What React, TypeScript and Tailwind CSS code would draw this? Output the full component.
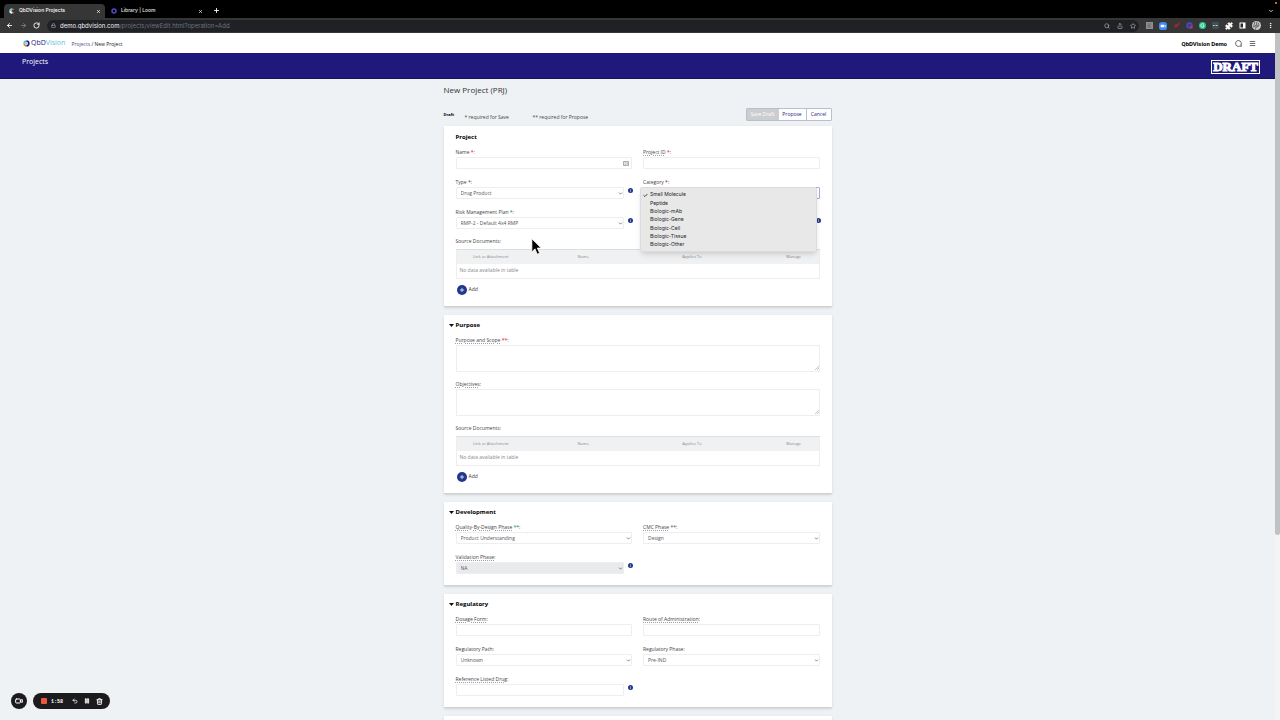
import { useState } from 'react';
import type { ReactNode } from 'react';
import {
  ArrowLeft,
  ArrowRight,
  Check,
  ChevronDown,
  EllipsisVertical,
  Lock,
  Menu,
  MessageCircle,
  Pause,
  Plus,
  Puzzle,
  RotateCw,
  Search,
  Share,
  Star,
  Trash2,
  Undo2,
  Video,
  X,
} from 'lucide-react';

const CATEGORIES = [
  'Small Molecule',
  'Peptide',
  'Biologic-mAb',
  'Biologic-Gene',
  'Biologic-Cell',
  'Biologic-Tissue',
  'Biologic-Other',
];

function LogoMark({ className }: { className?: string }) {
  return (
    <svg viewBox="0 0 20 20" className={className} aria-hidden="true">
      <path d="M10 1 A9 9 0 0 0 1 10 L6 10 A4 4 0 0 1 10 6 Z" fill="#4fc3d9" />
      <path d="M1 10 A9 9 0 0 0 10 19 L10 14 A4 4 0 0 1 6 10 Z" fill="#e9853a" />
      <path d="M10 1 A9 9 0 0 1 10 19 L10 14 A4 4 0 0 0 10 6 Z" fill="#29227f" />
      <circle cx="10" cy="10" r="4" fill="#9fdbe6" />
    </svg>
  );
}

// same mark in the lighter colours used on dark tab strips
function TabMark() {
  return (
    <svg viewBox="0 0 20 20" className="h-[6px] w-[6px]" aria-hidden="true">
      <path d="M10 1 A9 9 0 0 0 1 10 L10 10 Z" fill="#6ad4e8" />
      <path d="M1 10 A9 9 0 0 0 10 19 L13 14 L6 10 Z" fill="#f2f2f2" />
      <path d="M10 1 L17 4 L12 8 Z" fill="#e9853a" />
      <path d="M12 16 L18 14 L14 19 Z" fill="#e9853a" />
    </svg>
  );
}

function BrowserTabs() {
  return (
    <div className="relative flex h-[18px] items-end bg-black px-1 text-white">
      <span className="absolute right-[3px] top-[2px] h-[2px] w-[2px] rounded-full bg-amber-500" />
      <div className="flex h-[14px] w-[101px] items-center rounded-t bg-[#363636] pl-[5px] pr-1">
        <TabMark />
        <span className="ml-1 flex-1 text-[5px] font-medium">QbDVision Projects</span>
        <button aria-label="Close QbDVision Projects"><X size={5} strokeWidth={3} /></button>
      </div>
      <div className="flex h-[14px] w-[98px] items-center pl-[6px]">
        <svg viewBox="0 0 12 12" className="h-[6px] w-[6px]" aria-hidden="true">
          <circle cx="6" cy="6" r="4" fill="none" stroke="#5145c9" strokeWidth="3" />
        </svg>
        <span className="ml-1 flex-1 text-[5px] font-medium text-gray-200">Library | Loom</span>
        <button aria-label="Close Library"><X size={5} strokeWidth={3} /></button>
      </div>
      <button aria-label="New tab" className="mb-[4px] ml-[10px]"><Plus size={7} strokeWidth={3} /></button>
      <button aria-label="Tab list" className="mb-[4px] ml-auto mr-[2px]"><ChevronDown size={6} strokeWidth={3} /></button>
    </div>
  );
}

function BrowserToolbar() {
  return (
    <div className="flex h-[15px] items-center bg-[#363636] px-[6px] text-white">
      <button aria-label="Back"><ArrowLeft size={7} strokeWidth={3} /></button>
      <button aria-label="Forward" className="ml-[7px] text-gray-400"><ArrowRight size={7} /></button>
      <button aria-label="Reload" className="ml-[6px]"><RotateCw size={7} strokeWidth={3} /></button>
      <div className="ml-[7px] flex h-[12px] flex-1 items-center rounded-full bg-[#202124] pl-[4px] pr-[3px]">
        <Lock size={5} className="text-gray-400" strokeWidth={3} />
        <span className="ml-[4px] flex-1 text-[6px] text-gray-100">
          demo.qbdvision.com<span className="text-gray-500">/projects/viewEdit.html?operation=Add</span>
        </span>
        <div className="flex items-center gap-[7px] text-gray-300">
          <Search size={6} />
          <Share size={6} />
          <Star size={6} />
        </div>
      </div>
      <div className="ml-[7px] flex items-center gap-[6px]">
        <svg viewBox="0 0 14 14" className="h-[7px] w-[7px]" aria-hidden="true">
          <rect width="14" height="14" fill="#8b8f92" />
          <path d="M3 4h8M3 7h5M3 10h8" stroke="#5b5f62" strokeWidth="1.5" />
        </svg>
        <svg viewBox="0 0 14 14" className="h-[8px] w-[8px]" aria-hidden="true">
          <rect width="14" height="14" rx="5" fill="#3f8cf0" />
          <path d="M3 5h6v4H3zM9.5 6.5l2-1.5v4l-2-1.5z" fill="#fff" />
        </svg>
        <svg viewBox="0 0 14 14" className="h-[7px] w-[7px]" aria-hidden="true">
          <path d="M1 13L5 4l3 1 4-5 1 3-5 8-2-2z" fill="#b3202c" />
        </svg>
        <svg viewBox="0 0 14 14" className="h-[7px] w-[7px]" aria-hidden="true">
          <circle cx="7" cy="7" r="6.500" fill="#4d49b8" />
          <circle cx="7" cy="7" r="2.500" fill="none" stroke="#2b2780" strokeWidth="1.500" />
          <rect x="8" y="8" width="5" height="5" fill="#b53a63" />
        </svg>
        <svg viewBox="0 0 14 14" className="h-[7px] w-[7px]" aria-hidden="true">
          <circle cx="7" cy="7" r="7" fill="#22c98d" />
          <path d="M10 5a3.500 3.500 0 1 0 0 4V7.500H7.500" fill="none" stroke="#fff" strokeWidth="1.500" />
        </svg>
        <svg viewBox="0 0 14 14" className="h-[7px] w-[7px]" aria-hidden="true">
          <rect width="14" height="14" rx="2" fill="#3f4e57" />
          <path d="M2 7h10" stroke="#c5d0d6" strokeWidth="2" strokeDasharray="2 1" />
        </svg>
        <Puzzle size={8} fill="currentColor" />
        <svg viewBox="0 0 14 14" className="h-[7px] w-[7px]" aria-hidden="true">
          <rect x="1" y="1" width="12" height="12" fill="#fff" />
          <rect x="3" y="3" width="5" height="8" fill="#2b2b2b" />
        </svg>
        <svg viewBox="0 0 18 18" className="h-[9px] w-[9px]" aria-hidden="true">
          <circle cx="9" cy="9" r="9" fill="#c9c9c9" />
          <path d="M6 2l-3 9M10 1L7 17M13 4l-2 8M3 12l5-3M9 13l6-5" stroke="#444" strokeWidth="1.500" />
        </svg>
        <button aria-label="Browser menu"><EllipsisVertical size={7} strokeWidth={3} /></button>
      </div>
    </div>
  );
}

function SiteHeader() {
  return (
    <>
      <header className="flex h-[20px] items-center bg-white pl-[23px] pr-[19px]">
        <a href="#home" className="flex items-center text-[7px] leading-[10px] text-[#29227f]">
          <LogoMark className="mr-px h-[7px] w-[7px]" />
          QbD<span className="text-[#5cc3dc]">Vision</span>
        </a>
        <nav className="ml-[6px] pt-px text-[5px] leading-[10px] text-gray-900">
          <a href="#projects" className="text-[#4a4690]">Projects</a> / New Project
        </nav>
        <span className="ml-auto font-[Roboto] text-[6px] font-bold text-black">QbDVision Demo</span>
        <button aria-label="Messages" className="ml-[8px]"><MessageCircle size={7} className="-scale-x-100" /></button>
        <button aria-label="Menu" className="ml-[7px]"><Menu size={7} /></button>
      </header>
      <div className="flex h-[26px] items-start justify-between border-b border-[#17125c] bg-[#20197c] pl-[22px] pr-[15px] text-white">
        <h2 className="pt-[4px] text-[7px] leading-[10px]">Projects</h2>
        <div className="mt-[7px] border border-white px-px font-['Liberation_Serif',serif] text-[13px] font-bold leading-[12px] [-webkit-text-stroke:1px_white]">
          DRAFT
        </div>
      </div>
    </>
  );
}

function InfoButton({ name }: { name: string }) {
  return (
    <button type="button" aria-label={`About ${name}`} className="-mr-px mt-px h-[5px] w-[5px] shrink-0">
      <svg viewBox="0 0 10 10" className="h-[5px] w-[5px]">
        <circle cx="5" cy="5" r="5" fill="#20388c" />
        <path d="M5 4.500v3M5 2.200v1.200" stroke="#fff" strokeWidth="1.200" />
      </svg>
    </button>
  );
}

type FieldProps = {
  id: string;
  label: string;
  mark?: string;
  markClass?: string;
  hint?: boolean;
  info?: boolean;
  children: ReactNode;
};

function Field({ id, label, mark, markClass = 'text-gray-700', hint, info, children }: FieldProps) {
  return (
    <div>
      <label htmlFor={id} className="block text-[5px] leading-[10px] text-[#444]">
        <span className={hint ? 'underline decoration-gray-400 decoration-dotted decoration-1 underline-offset-1' : ''}>{label}</span>
        {mark && <span className={markClass}> {mark}</span>}:
      </label>
      <div className="flex gap-[4px]">
        <div className="relative min-w-0 flex-1">{children}</div>
        {info && <InfoButton name={label} />}
      </div>
    </div>
  );
}

const inputClass = 'block h-[12px] w-full rounded-[1px] border border-[#eeeeee] bg-white px-[4px] text-[5px] text-[#555] outline-none';

function Select({ id, value, disabled }: { id: string; value: string; disabled?: boolean }) {
  return (
    <>
      <select
        id={id}
        defaultValue={value}
        disabled={disabled}
        className="block h-[12px] w-full appearance-none rounded-[1px] border border-[#eeeeee] bg-white px-[4px] pt-px text-[5px] text-[#555] opacity-100 outline-none disabled:bg-[#e9eaec]"
      >
        <option>{value}</option>
      </select>
      <ChevronDown size={5} className="pointer-events-none absolute right-[1px] top-[4px] text-gray-700" strokeWidth={3} />
    </>
  );
}

function TextArea({ id }: { id: string }) {
  return (
    <>
      <textarea id={id} className="block h-[27px] w-full resize-none border border-[#eeeeee] text-[5px] outline-none" />
      <svg viewBox="0 0 8 8" className="absolute bottom-[2px] right-[1px] h-[4px] w-[4px]" aria-hidden="true">
        <path d="M0 8L8 0M4 8l4-4" stroke="#888" strokeWidth="1" />
      </svg>
    </>
  );
}

function CategoryMenu() {
  const [selected, setSelected] = useState('Small Molecule');

  return (
    <>
      <button
        id="category"
        type="button"
        aria-haspopup="listbox"
        className="block h-[12px] w-full rounded-[1px] border border-[#a5abcc] bg-white"
      />
      <ul
        role="listbox"
        aria-label="Category"
        className="absolute -left-[3px] right-[3px] top-0 z-10 flex h-[65px] flex-col rounded-[2px] border border-[#dcdcdc] bg-[#e8e8e8] pb-[2px] pt-[3px] font-[Inter] text-[5px] text-[#222] shadow-md"
      >
        {CATEGORIES.map((category) => (
          <li
            key={category}
            role="option"
            aria-selected={category === selected}
            onClick={() => setSelected(category)}
            className="flex min-h-0 flex-1 items-center pl-[2px]"
          >
            <span className="w-[7px]">{category === selected && <Check size={5} strokeWidth={4} />}</span>
            {category}
          </li>
        ))}
      </ul>
    </>
  );
}

function Card({ title, collapsible, children }: { title: string; collapsible?: boolean; children?: ReactNode }) {
  return (
    <section className={`border-b border-[#cfd1d3] bg-white px-[12px] pb-[11px] shadow-sm ${collapsible ? 'pt-[5px]' : 'pt-[6px]'}`}>
      <h3 className="relative mb-[5px] text-[6px] font-bold leading-[10px] text-black">
        {collapsible && (
          <svg viewBox="0 0 10 6" className="absolute -left-[7px] top-[4px] h-[3px] w-[5px]" aria-hidden="true">
            <path d="M0 0h10L5 6z" fill="#111" />
          </svg>
        )}
        {title}
      </h3>
      {children}
    </section>
  );
}

function SourceDocuments() {
  return (
    <div>
      <p className="text-[5px] leading-[10px] text-[#444]">Source Documents:</p>
      <table className="mt-[3px] w-full table-fixed border-collapse border border-[#eeeeee] text-[5px] text-[#888]">
        <thead className="bg-[#f0f1f3] text-[4px]">
          <tr className="h-[14px] border-t border-[#dcdee0]">
            <th className="w-[19%] p-0 font-normal">Link or Attachment</th>
            <th className="w-[32%] p-0 font-normal">Name</th>
            <th className="w-[28%] p-0 font-normal">Applies To</th>
            <th className="p-0 pl-[26px] font-normal">Manage</th>
          </tr>
        </thead>
        <tbody>
          <tr className="h-[15px]">
            <td colSpan={4} className="p-0 pl-[3px]">No data available in table</td>
          </tr>
        </tbody>
      </table>
      <button type="button" className="ml-px mt-[6px] flex h-[10px] items-center gap-[2px] text-[5px] text-[#333]">
        <span className="flex h-[10px] w-[10px] items-center justify-center rounded-full bg-[#20388c] text-white">
          <Plus size={6} strokeWidth={3} />
        </span>
        Add
      </button>
    </div>
  );
}

function ProjectForm() {
  return (
    <form className="mx-auto w-full max-w-[388px]">
      <h1 className="pt-[5px] text-[8px] leading-[12px] text-[#333]">New Project (PRJ)</h1>
      <div className="mb-[5px] mt-[12px] flex h-[13px] items-center text-[5px] text-[#444]">
        <strong className="w-[21px] text-[4px] text-black">Draft</strong>
        <span className="w-[68px] pt-[7px]">* required for Save</span>
        <span className="pt-[7px]">** required for Propose</span>
        <div className="ml-auto flex h-[13px] rounded-[1px] border border-[#b9bfd2] bg-white text-[#29227f]">
          <button type="button" disabled className="w-[32px] bg-[#cbcdcf] pt-px text-white">Save Draft</button>
          <button type="button" className="w-[28px] border-r border-[#b9bfd2] pt-px">Propose</button>
          <button type="button" className="w-[24px] pt-px">Cancel</button>
        </div>
      </div>

      <div className="space-y-[8px]">
        <Card title="Project">
          <div className="grid grid-cols-2 gap-x-[11px] gap-y-[8px]">
            <Field id="name" label="Name" mark="*" markClass="text-red-600">
              <input id="name" className={inputClass} />
              <svg viewBox="0 0 12 10" className="absolute right-[3px] top-[4px] h-[5px] w-[6px]" aria-hidden="true">
                <path d="M1 1h10v8H1zM3 3.500h4M3 6.500h4M9 3v4" fill="none" stroke="#777" strokeWidth="1.200" />
              </svg>
            </Field>
            <Field id="project-id" label="Project ID" mark="*" markClass="text-red-600" hint>
              <input id="project-id" className={inputClass} />
            </Field>
            <Field id="type" label="Type" mark="*" info>
              <Select id="type" value="Drug Product" />
            </Field>
            <Field id="category" label="Category" mark="*" markClass="text-red-800">
              <CategoryMenu />
            </Field>
            <Field id="rmp" label="Risk Management Plan" mark="*" markClass="text-green-700" info>
              <Select id="rmp" value="RMP-2 - Default 4x4 RMP" />
            </Field>
            <div className="flex justify-end pt-[10px]">
              <InfoButton name="category" />
            </div>
          </div>
          <div className="pt-[7px]">
            <SourceDocuments />
          </div>
        </Card>

        <Card title="Purpose" collapsible>
          <div className="space-y-[7px]">
            <Field id="scope" label="Purpose and Scope" mark="**" markClass="text-red-600" hint>
              <TextArea id="scope" />
            </Field>
            <Field id="objectives" label="Objectives" hint>
              <TextArea id="objectives" />
            </Field>
            <SourceDocuments />
          </div>
        </Card>

        <Card title="Development" collapsible>
          <div className="grid grid-cols-2 gap-x-[11px] gap-y-[8px]">
            <Field id="qbd-phase" label="Quality-By-Design Phase" mark="**" markClass="text-green-700" hint>
              <Select id="qbd-phase" value="Product Understanding" />
            </Field>
            <Field id="cmc-phase" label="CMC Phase" mark="**" hint>
              <Select id="cmc-phase" value="Design" />
            </Field>
            <Field id="validation" label="Validation Phase" hint info>
              <Select id="validation" value="NA" disabled />
            </Field>
          </div>
        </Card>

        <Card title="Regulatory" collapsible>
          <div className="grid grid-cols-2 gap-x-[11px] gap-y-[8px]">
            <Field id="dosage" label="Dosage Form" hint>
              <input id="dosage" className={inputClass} />
            </Field>
            <Field id="route" label="Route of Administration" hint>
              <input id="route" className={inputClass} />
            </Field>
            <Field id="reg-path" label="Regulatory Path">
              <Select id="reg-path" value="Unknown" />
            </Field>
            <Field id="reg-phase" label="Regulatory Phase">
              <Select id="reg-phase" value="Pre-IND" />
            </Field>
            <Field id="reference-drug" label="Reference Listed Drug" hint info>
              <input id="reference-drug" className={inputClass} />
            </Field>
          </div>
        </Card>

        <Card title="" />
      </div>
    </form>
  );
}

function RecorderControls() {
  return (
    <div className="fixed bottom-[11px] left-[11px] flex items-center gap-[6px] text-white">
      <button aria-label="Camera" className="flex h-[16px] w-[16px] items-center justify-center rounded-full bg-[#1b1b1d]">
        <Video size={8} strokeWidth={3} />
      </button>
      <div className="flex h-[16px] w-[77px] items-center rounded-full bg-[#1b1b1d] pl-[8px] pr-[7px]">
        <button aria-label="Stop" className="h-[6px] w-[6px] rounded-[1px] bg-[#e8593c]" />
        <span className="ml-[4px] pt-px font-['Liberation_Mono'] text-[5px] font-bold leading-[8px]">1:58</span>
        <div className="ml-auto flex items-center gap-[6px]">
          <button aria-label="Restart"><Undo2 size={6} strokeWidth={3} /></button>
          <button aria-label="Pause"><Pause size={6} fill="currentColor" /></button>
          <button aria-label="Delete"><Trash2 size={7} strokeWidth={3} /></button>
        </div>
      </div>
    </div>
  );
}

export default function App() {
  return (
    <div className="flex h-screen flex-col overflow-hidden font-['Open_Sans',sans-serif]">
      <div className="shrink-0 font-[Inter]">
        <BrowserTabs />
        <BrowserToolbar />
      </div>
      <div className="flex min-h-0 flex-1 bg-[#eef2f4]">
        <main className="min-w-0 flex-1 overflow-hidden">
          <SiteHeader />
          <ProjectForm />
        </main>
        <div className="w-[5px] bg-[#f4f4f4]">
          <div className="h-[73%] rounded-b-full bg-[#bfc1c3]" />
        </div>
      </div>
      <RecorderControls />
      <svg viewBox="0 0 14 22" className="pointer-events-none fixed left-[531px] top-[238px] h-[17px] w-[11px]" aria-hidden="true">
        <path d="M1 1v17l4-4 3 7 3-1.500-3-6.500h5z" fill="#000" stroke="#fff" strokeWidth="1" />
      </svg>
    </div>
  );
}
